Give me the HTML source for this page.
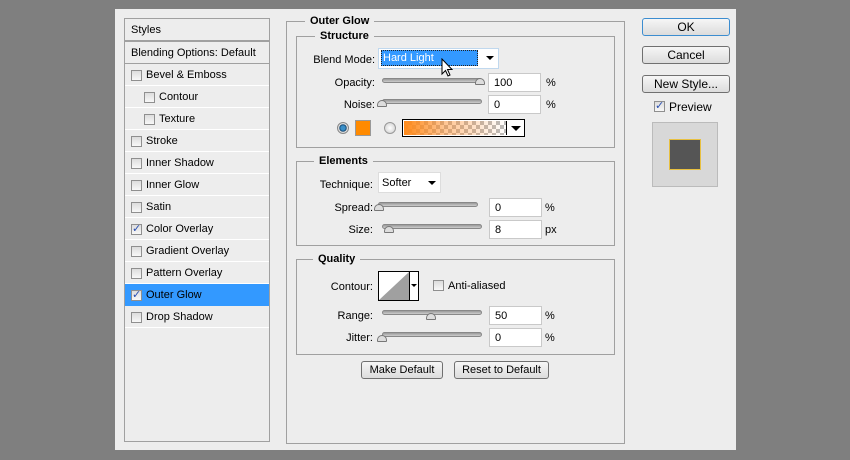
<!DOCTYPE html>
<html><head><meta charset="utf-8"><style>
*{box-sizing:border-box;margin:0;padding:0}
body{width:850px;height:460px;background:#7f7f7f;position:relative;overflow:hidden;font-family:"Liberation Sans",sans-serif;font-size:11px;color:#000}
.a{position:absolute}
.dlg{left:115px;top:9px;width:621px;height:441px;background:#ededed}
.panel{left:124px;top:18px;width:146px;height:424px;border:1px solid #a0a0a0;background:#ededed}
.row{position:absolute;left:0;width:144px;height:22px;border-bottom:1px solid #fff;line-height:23px}
.row span{top:0}
.cb{position:absolute;width:11px;height:11px;border:1px solid #8f8f8f;background:linear-gradient(#ddd,#f8f8f8);top:6px}
.ck{font-size:11px;color:#2a4fb0;line-height:9px;text-align:center}
.box{border:1px solid #a0a0a0}
.lg{position:absolute;background:#ededed;padding:0 5px;font-weight:bold;font-size:11px;line-height:12px}
.lbl{position:absolute;text-align:right;width:80px;margin-top:1px}
.slider{position:absolute;height:5px;width:100px;border-radius:3px;background:linear-gradient(#999,#ccc);border:1px solid #888}
.thumb{position:absolute;width:10px;height:7px;background:#ddd;border:1px solid #777;border-radius:5px 5px 1px 1px}
.inp{position:absolute;width:53px;height:19px;background:#fff;border:1px solid #c9c9c9;padding-left:5px;line-height:19px}
.btn{position:absolute;border:1px solid #707070;border-radius:3px;background:linear-gradient(#f6f6f6,#dcdcdc);text-align:center;line-height:16px}
</style></head><body>
<div class="a dlg"></div>
<div class="a panel">
<div class="row" style="top:0;height:23px;border-bottom:2px solid #a0a0a0;line-height:22px;padding-left:6px">Styles</div>
<div class="row" style="top:23px;border-bottom:1px solid #a0a0a0;padding-left:6px">Blending Options: Default</div>
<div class="row" style="top:45px"><div class="cb" style="left:6px"></div><span class="a" style="left:21px">Bevel &amp; Emboss</span></div>
<div class="row" style="top:67px"><div class="cb" style="left:19px"></div><span class="a" style="left:34px">Contour</span></div>
<div class="row" style="top:89px"><div class="cb" style="left:19px"></div><span class="a" style="left:34px">Texture</span></div>
<div class="row" style="top:111px"><div class="cb" style="left:6px"></div><span class="a" style="left:21px">Stroke</span></div>
<div class="row" style="top:133px"><div class="cb" style="left:6px"></div><span class="a" style="left:21px">Inner Shadow</span></div>
<div class="row" style="top:155px"><div class="cb" style="left:6px"></div><span class="a" style="left:21px">Inner Glow</span></div>
<div class="row" style="top:177px"><div class="cb" style="left:6px"></div><span class="a" style="left:21px">Satin</span></div>
<div class="row" style="top:199px"><div class="cb ck" style="left:6px">✓</div><span class="a" style="left:21px">Color Overlay</span></div>
<div class="row" style="top:221px"><div class="cb" style="left:6px"></div><span class="a" style="left:21px">Gradient Overlay</span></div>
<div class="row" style="top:243px"><div class="cb" style="left:6px"></div><span class="a" style="left:21px">Pattern Overlay</span></div>
<div class="row" style="top:265px;background:#3399ff;border-bottom:1px solid #3399ff"><div class="cb ck" style="left:6px">✓</div><span class="a" style="left:21px">Outer Glow</span></div>
<div class="row" style="top:287px"><div class="cb" style="left:6px"></div><span class="a" style="left:21px">Drop Shadow</span></div>
</div>

<div class="a box" style="left:286px;top:21px;width:339px;height:423px"></div>
<div class="lg" style="left:305px;top:15px">Outer Glow</div>

<div class="a box" style="left:296px;top:36px;width:319px;height:112px"></div>
<div class="lg" style="left:315px;top:30px">Structure</div>
<div class="lbl" style="left:295px;top:53px">Blend Mode:</div>
<div class="a" style="left:378px;top:48px;width:121px;height:21px;background:#fff;border:1px solid #c0d8ee"></div>
<div class="a" style="left:381px;top:50px;width:97px;height:16px;background:#3399ff;border:1px dotted #222;color:#fff;line-height:15px;padding-left:1px">Hard Light</div>
<div class="a" style="left:486px;top:56px;border:4px solid transparent;border-top:4px solid #000;border-bottom:none"></div>
<svg class="a" style="left:441px;top:58px" width="14" height="20"><path d="M1 1 L1 16 L4.5 12.5 L7 18 L9 17 L6.5 11.5 L11 11.5 Z" fill="#fff" stroke="#000" stroke-width="1"/></svg>
<div class="lbl" style="left:295px;top:76px">Opacity:</div>
<div class="slider" style="left:382px;top:78px"></div><div class="thumb" style="left:475px;top:78px"></div>
<div class="inp" style="left:488px;top:73px">100</div><span class="a" style="left:546px;top:77px">%</span>
<div class="lbl" style="left:295px;top:98px">Noise:</div>
<div class="slider" style="left:382px;top:99px"></div><div class="thumb" style="left:377px;top:100px"></div>
<div class="inp" style="left:488px;top:95px">0</div><span class="a" style="left:546px;top:99px">%</span>
<div class="a" style="left:337px;top:122px;width:12px;height:12px;border-radius:50%;border:1px solid #888;background:radial-gradient(#3a8fc8 30%,#0d3c66 50%,#ddd 55%)"></div>
<div class="a" style="left:355px;top:120px;width:16px;height:16px;background:#ff8a00;border:1px solid #999"></div>
<div class="a" style="left:384px;top:122px;width:12px;height:12px;border-radius:50%;border:1px solid #999;background:radial-gradient(#fff,#ccc)"></div>
<div class="a" style="left:402px;top:119px;width:123px;height:18px;border:1px solid #000;background:#fff"></div>
<div class="a" style="left:404px;top:121px;width:102px;height:14px;background:linear-gradient(90deg,#ff8a1a,rgba(255,140,40,.5) 40%,rgba(255,140,40,0)),repeating-conic-gradient(#bbb 0 25%,#fff 0 50%) 0 0/8px 8px"></div>
<div class="a" style="left:506px;top:121px;width:1px;height:14px;background:#000"></div>
<div class="a" style="left:511px;top:126px;border:5px solid transparent;border-top:5px solid #000;border-bottom:none"></div>

<div class="a box" style="left:296px;top:161px;width:319px;height:85px"></div>
<div class="lg" style="left:314px;top:155px">Elements</div>
<div class="lbl" style="left:293px;top:178px">Technique:</div>
<div class="a" style="left:378px;top:172px;width:63px;height:21px;background:#fff;border:1px solid #ddd;padding-left:3px;line-height:21px">Softer</div>
<div class="a" style="left:428px;top:181px;border:4px solid transparent;border-top:4px solid #000;border-bottom:none"></div>
<div class="lbl" style="left:293px;top:201px">Spread:</div>
<div class="slider" style="left:378px;top:202px"></div><div class="thumb" style="left:374px;top:204px"></div>
<div class="inp" style="left:489px;top:198px">0</div><span class="a" style="left:545px;top:202px">%</span>
<div class="lbl" style="left:293px;top:223px">Size:</div>
<div class="slider" style="left:382px;top:224px"></div><div class="thumb" style="left:384px;top:226px"></div>
<div class="inp" style="left:489px;top:220px">8</div><span class="a" style="left:545px;top:224px">px</span>

<div class="a box" style="left:296px;top:259px;width:319px;height:96px"></div>
<div class="lg" style="left:313px;top:253px">Quality</div>
<div class="lbl" style="left:293px;top:280px">Contour:</div>
<div class="a" style="left:378px;top:271px;width:41px;height:30px;border:1px solid #000;background:#fff"></div>
<svg class="a" style="left:379px;top:272px" width="30" height="28"><path d="M0 28 L30 0 L30 28 Z" fill="#a0a0a0"/></svg>
<div class="a" style="left:409px;top:272px;width:1px;height:28px;background:#000"></div>
<div class="a" style="left:411px;top:284px;border:3px solid transparent;border-top:3px solid #000;border-bottom:none"></div>
<div class="cb" style="left:433px;top:280px"></div>
<span class="a" style="left:448px;top:280px">Anti-aliased</span>
<div class="lbl" style="left:293px;top:309px">Range:</div>
<div class="slider" style="left:382px;top:310px"></div><div class="thumb" style="left:426px;top:313px"></div>
<div class="inp" style="left:489px;top:306px">50</div><span class="a" style="left:545px;top:310px">%</span>
<div class="lbl" style="left:293px;top:331px">Jitter:</div>
<div class="slider" style="left:382px;top:332px"></div><div class="thumb" style="left:377px;top:335px"></div>
<div class="inp" style="left:489px;top:328px">0</div><span class="a" style="left:545px;top:332px">%</span>

<div class="btn" style="left:361px;top:361px;width:82px;height:18px">Make Default</div>
<div class="btn" style="left:454px;top:361px;width:95px;height:18px">Reset to Default</div>

<div class="btn" style="left:642px;top:18px;width:88px;height:18px;border-color:#3c8dd0;font-size:12px">OK</div>
<div class="btn" style="left:642px;top:46px;width:88px;height:18px;font-size:12px">Cancel</div>
<div class="btn" style="left:642px;top:75px;width:88px;height:18px;font-size:12px">New Style...</div>
<div class="cb ck" style="left:654px;top:101px">✓</div>
<span class="a" style="left:669px;top:100px;font-size:12px">Preview</span>
<div class="a" style="left:652px;top:122px;width:66px;height:65px;background:#d8d8d8;border:1px solid #bbb"></div>
<div class="a" style="left:669px;top:139px;width:32px;height:31px;background:#555;border:1px solid #e8c040"></div>
</body></html>
